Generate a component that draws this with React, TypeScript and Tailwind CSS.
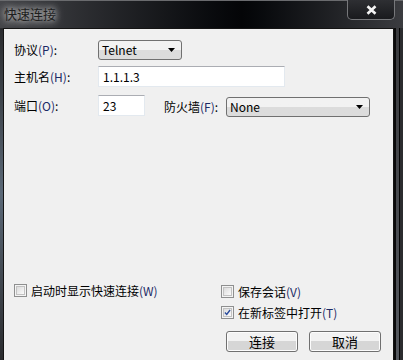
import React from 'react';

// Small helpers for the classic Windows 7 dialog look
const Hot: React.FC<{ children: React.ReactNode }> = ({ children }) => (
  <span className="text-[#1b2a66]">{children}</span>
);

const Combo: React.FC<{ value: string; className?: string }> = ({ value, className = '' }) => (
  <div
    className={`flex items-center justify-between h-[20px] pl-[3px] pr-[6px] rounded-[3px] border border-[#707070] bg-gradient-to-b from-[#f2f2f2] from-50% to-[#dcdcdc] to-50% text-[12px] text-black ${className}`}
  >
    <span className="leading-none">{value}</span>
    <svg width="7" height="4" viewBox="0 0 7 4">
      <path d="M0 0H7L3.5 4Z" fill="#000" />
    </svg>
  </div>
);

const Input: React.FC<{ value: string; className?: string }> = ({ value, className = '' }) => (
  <div
    className={`flex items-center h-[21px] pl-[4px] bg-white border border-[#e3e9ef] border-t-[#abadb3] text-[12px] text-black ${className}`}
  >
    {value}
  </div>
);

const Check: React.FC<{ checked?: boolean; children: React.ReactNode }> = ({ checked, children }) => (
  <div className="flex items-center gap-[4px] text-[12px] text-black leading-none">
    <div className="w-[13px] h-[13px] border border-[#8e8f8f] bg-[#f4f4f4] p-[1px]">
      <div className="w-full h-full border border-[#c2c2c2] bg-gradient-to-br from-[#dcdcdc] to-[#fbfbfb] flex items-center justify-center">
        {checked && (
          <svg width="9" height="9" viewBox="0 0 9 9">
            <path d="M1.2 4.6L3.5 7 7.8 1.3" stroke="#2a4c9c" strokeWidth="1.8" fill="none" />
          </svg>
        )}
      </div>
    </div>
    <span>{children}</span>
  </div>
);

const Button: React.FC<{ children: React.ReactNode }> = ({ children }) => (
  <div className="w-[72px] h-[21px] rounded-[3px] border border-[#707070] bg-gradient-to-b from-[#f2f2f2] from-50% to-[#d6d6d6] to-50% shadow-[inset_0_0_0_1px_#fcfcfc] flex items-center justify-center text-[13px] text-black">
    {children}
  </div>
);

export default function App() {
  return (
    <div
      className="w-[403px] h-[360px] overflow-hidden flex flex-col bg-[#1b1c1e]"
      style={{ fontFamily: '"Noto Sans CJK SC", "DejaVu Sans", sans-serif' }}
    >
      {/* Title bar */}
      <div className="relative h-[28px] flex items-start bg-gradient-to-r from-[#45464a] via-[#040507] via-60% to-[#3b3c40] border-t border-[#6a6b6e]">
        <span className="ml-[4px] mt-[4px] text-[13px] text-[#1e1e1e] leading-[18px] [text-shadow:0_0_6px_#d8d8d8,0_0_10px_#bdbdbd]">
          快速连接
        </span>
        <div className="absolute right-[8px] top-[-1px] w-[48px] h-[20px] rounded-b-[5px] border border-[#77787b] border-t-0 bg-gradient-to-b from-[#2e2f33] to-[#191a1d] flex items-center justify-center">
          <svg width="11" height="10" viewBox="0 0 11 10">
            <path d="M1.5 1.2L9.5 8.8M9.5 1.2L1.5 8.8" stroke="#f4f4f4" strokeWidth="2.6" />
          </svg>
        </div>
      </div>

      <div className="flex flex-1 min-h-0">
        <div className="w-[3px] bg-gradient-to-b from-[#2a2b2e] via-[#5b6978] to-[#2a2b2e]" />
        {/* Client area */}
        <div className="w-[391px] flex flex-col bg-[#f0f0f0] border-l border-t border-r border-[#141414] text-[12px] text-black">
          <div className="flex flex-col pt-[11px] pl-[10px]">
            <div className="flex items-center h-[20px]">
              <span className="w-[84px]">
                协议<Hot>(P)</Hot>:
              </span>
              <Combo value="Telnet" className="w-[84px]" />
            </div>
            <div className="flex items-center h-[21px] mt-[6px]">
              <span className="w-[84px]">
                主机名<Hot>(H)</Hot>:
              </span>
              <Input value="1.1.1.3" className="w-[187px]" />
            </div>
            <div className="flex items-center h-[21px] mt-[8px]">
              <span className="w-[84px]">
                端口<Hot>(O)</Hot>:
              </span>
              <Input value="23" className="w-[47px]" />
              <span className="ml-[19px] w-[62px] mt-[2px]">
                防火墙<Hot>(F)</Hot>:
              </span>
              <Combo value="None" className="w-[144px] mt-[3px]" />
            </div>
          </div>

          <div className="flex-1" />

          <div className="flex pl-[10px] pb-[8px]">
            <div className="w-[207px] pt-[0px]">
              <Check>
                启动时显示快速连接<Hot>(W)</Hot>
              </Check>
            </div>
            <div className="flex flex-col">
              <div className="mt-[1px]">
                <Check>
                  保存会话<Hot>(V)</Hot>
                </Check>
              </div>
              <div className="mt-[8px]">
                <Check checked>
                  在新标签中打开<Hot>(T)</Hot>
                </Check>
              </div>
              <div className="flex gap-[11px] ml-[5px] mt-[12px]">
                <Button>连接</Button>
                <Button>取消</Button>
              </div>
            </div>
          </div>
        </div>
        {/* Right frame */}
        <div className="flex-1 flex">
          <div className="w-[2px] bg-[#0a0a0a]" />
          <div className="w-[3px] bg-gradient-to-b from-[#3a3b3e] to-[#55595f]" />
          <div className="w-[1px] bg-[#050505]" />
          <div className="flex-1 bg-[#2b2c2f]" />
        </div>
      </div>
    </div>
  );
}
